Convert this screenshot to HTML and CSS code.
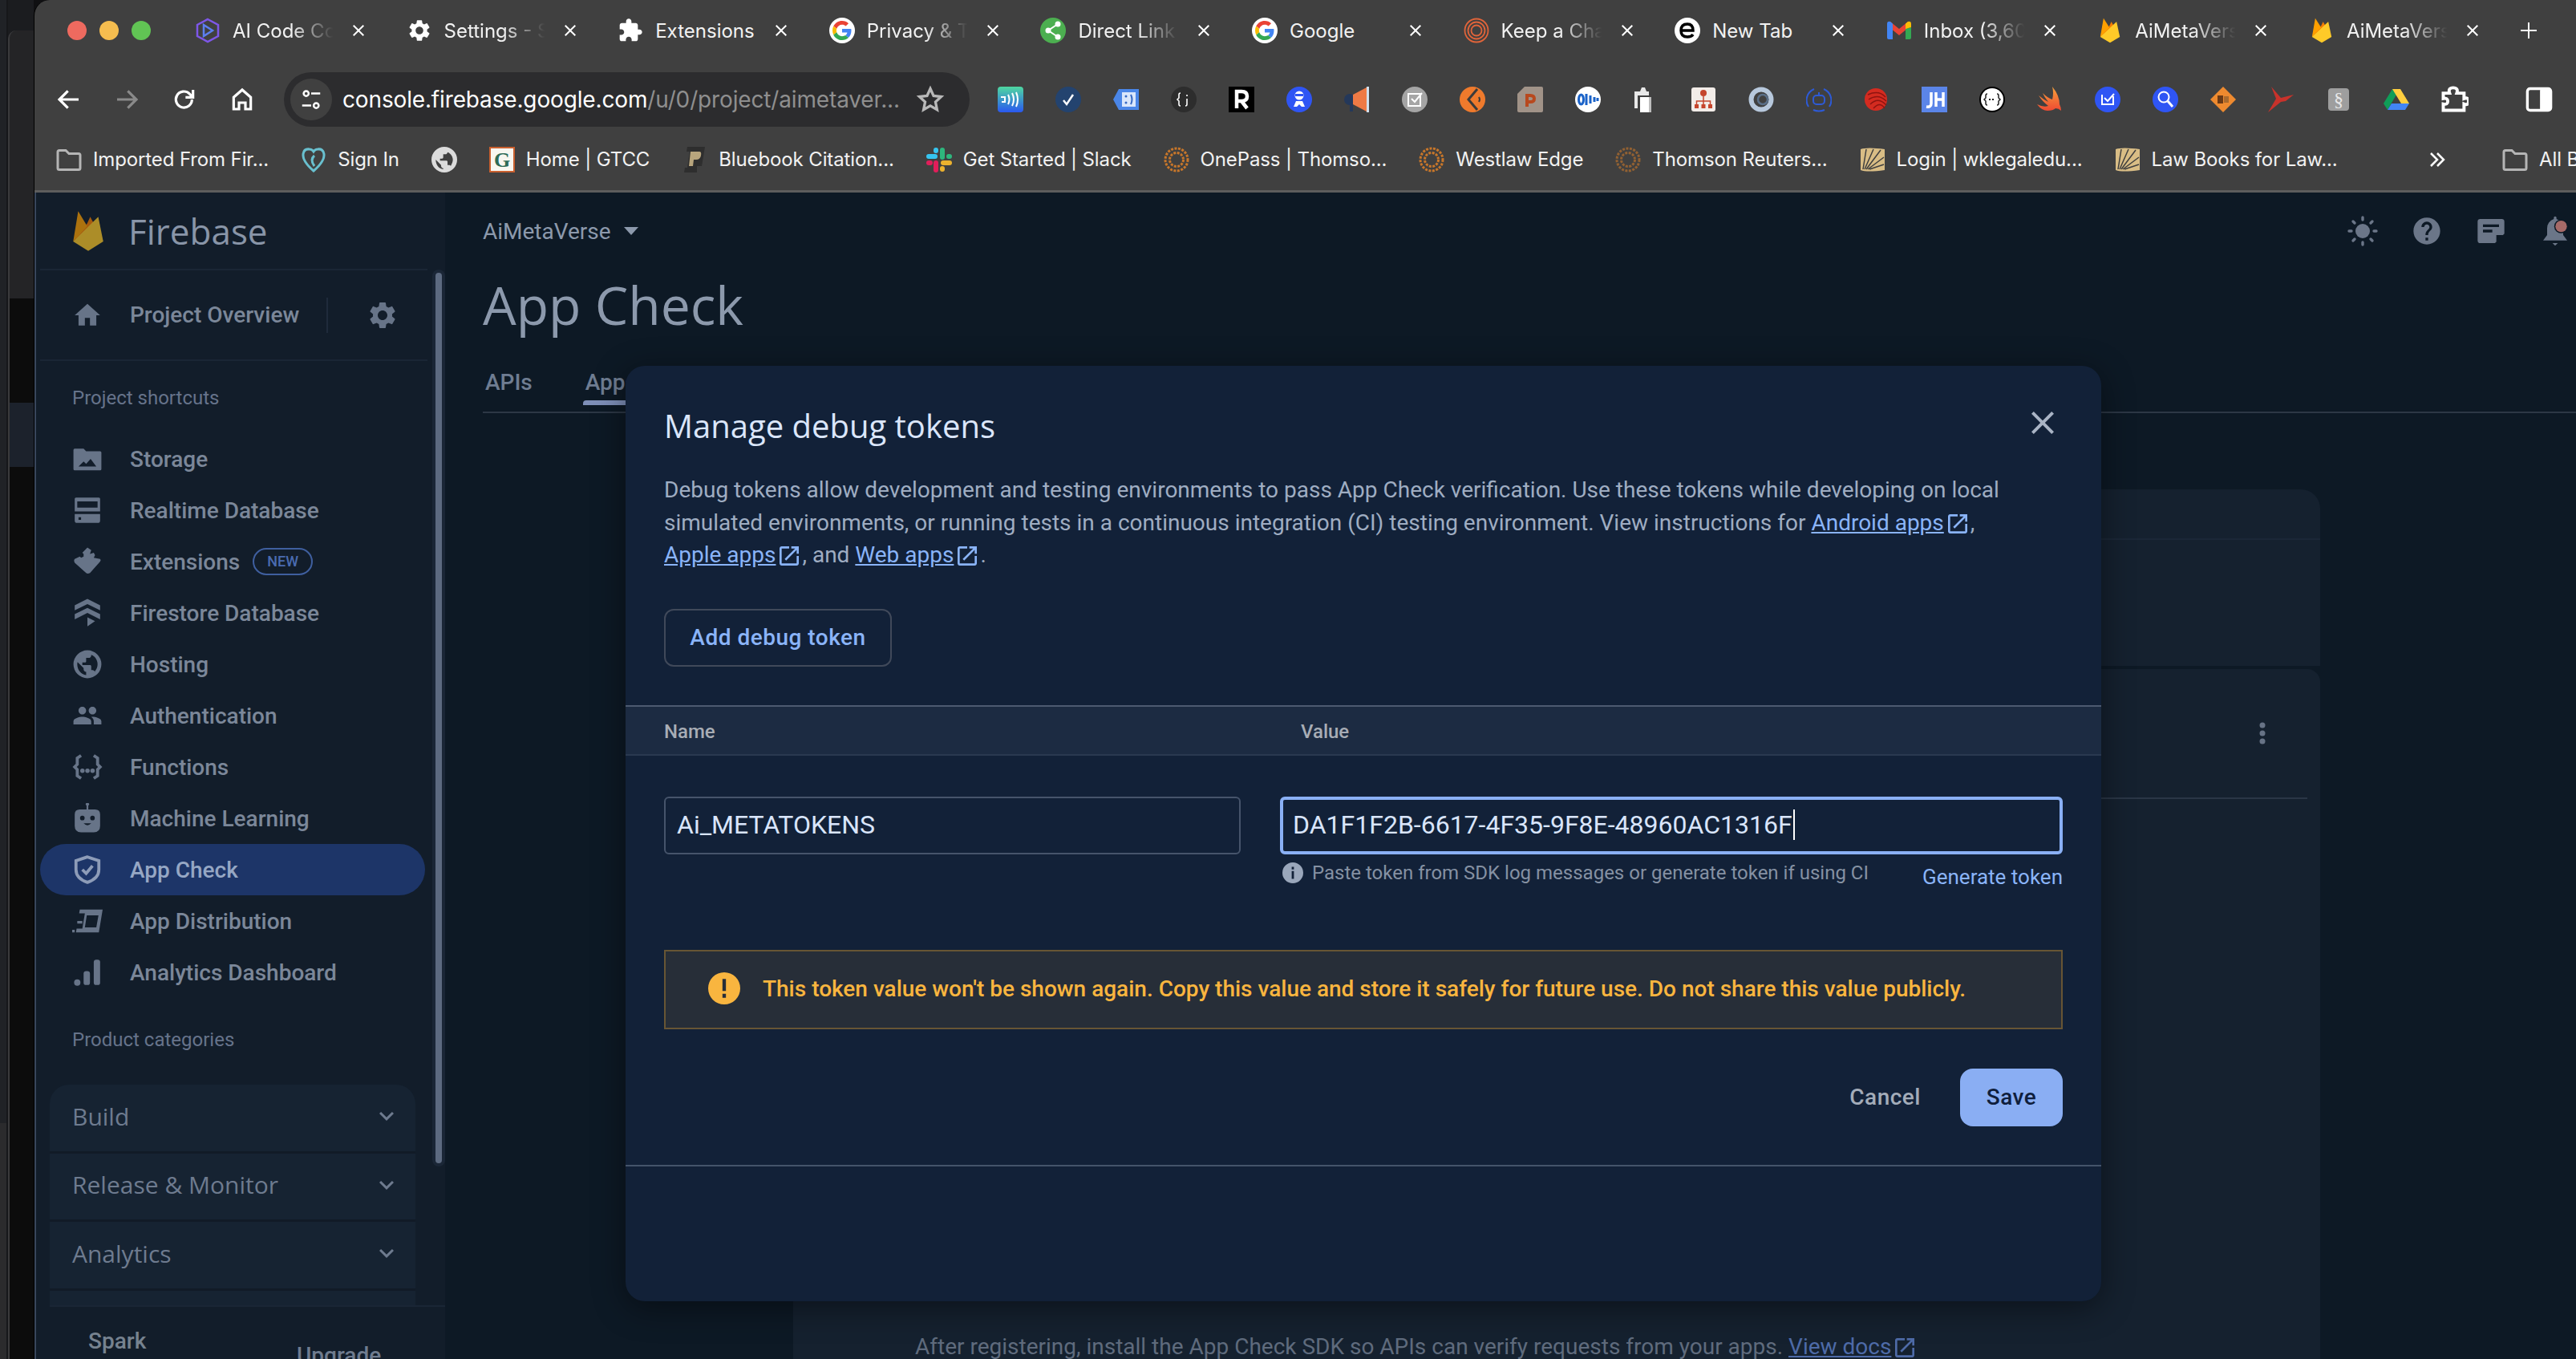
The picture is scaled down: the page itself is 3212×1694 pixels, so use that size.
FILE: index.html
```html
<!DOCTYPE html>
<html lang="en">
  <head>
    <meta charset="UTF-8" />
    <title>App Check - AiMetaVerse - Firebase console</title>
    <link rel="stylesheet" href="styles.css">
  </head>
  <body>
    <!-- shared icons -->
    <svg class="sprite">
      <symbol id="flame" viewBox="0 0 32 44" preserveAspectRatio="none">
        <path fill="#f57c00" d="M1 33 15 14l3-7 7 14z"/>
        <path fill="#ffa000" d="M1 33 6 1l9 16z"/>
        <path fill="#ffca28" d="M1 33 26 7l5 26-15 10z"/>
      </symbol>
      <symbol id="google" viewBox="-8 -8 64 64">
        <circle cx="24" cy="24" r="32" fill="#fff"/>
        <path fill="#EA4335" d="M24 9.5c3.54 0 6.71 1.22 9.21 3.6l6.85-6.85C35.9 2.38 30.47 0 24 0 14.62 0 6.51 5.38 2.56 13.22l7.98 6.19C12.43 13.72 17.74 9.5 24 9.5z"/>
        <path fill="#4285F4" d="M46.98 24.55c0-1.57-.15-3.09-.38-4.55H24v9.02h12.94c-.58 2.96-2.26 5.48-4.78 7.18l7.73 6c4.51-4.18 7.09-10.36 7.09-17.65z"/>
        <path fill="#FBBC05" d="M10.53 28.59c-.48-1.45-.76-2.99-.76-4.59s.27-3.14.76-4.59l-7.98-6.19C.92 16.46 0 20.12 0 24c0 3.88.92 7.54 2.56 10.78l7.97-6.19z"/>
        <path fill="#34A853" d="M24 48c6.48 0 11.93-2.13 15.89-5.81l-7.73-6c-2.15 1.45-4.92 2.3-8.16 2.3-6.26 0-11.57-4.22-13.47-9.91l-7.98 6.19C6.51 42.62 14.62 48 24 48z"/>
      </symbol>
      <symbol id="close" viewBox="0 0 24 24"><path d="M19 6.41 17.59 5 12 10.59 6.41 5 5 6.41 10.59 12 5 17.59 6.41 19 12 13.41 17.59 19 19 17.59 13.41 12z"/></symbol>
      <symbol id="folder" viewBox="0 0 32 32"><path fill="none" stroke="#b5b5b5" stroke-width="3" d="M2 6.5q0-2 2-2h8l4 4h12q2 0 2 2v16q0 2-2 2H4q-2 0-2-2z"/></symbol>
      <symbol id="ring" viewBox="0 0 32 32"><g fill="none" stroke="#c9772a" stroke-width="3" stroke-dasharray="3 1.5"><circle cx="16" cy="16" r="14"/><circle cx="16" cy="16" r="8.500"/></g></symbol>
      <symbol id="book" viewBox="0 0 32 32"><path fill="#d9bd85" d="M1 3q8-3 30 0v26q-22 3-30 0z"/><path fill="none" stroke="#3f3f3f" stroke-width="1.500" d="M4 28 8 3M6 28 17 3M8 28 26 4M10 28l20-15M12 28l18-6"/></symbol>
      <symbol id="open" viewBox="0 0 24 24"><path d="M19 19H5V5h7V3H5c-1.110 0-2 .9-2 2v14c0 1.100.89 2 2 2h14c1.100 0 2-.9 2-2v-7h-2zM14 3v2h3.590l-9.830 9.830 1.410 1.410L19 6.410V10h2V3z"/></symbol>
      <symbol id="more" viewBox="0 0 24 24"><path d="M16.59 8.59 12 13.170 7.410 8.590 6 10l6 6 6-6z"/></symbol>
    </svg>

    <div class="desktop">
      <div class="back-far"></div>
      <div class="back-near">
        <div class="back-bar"></div>
        <div class="back-row"><div class="back-select"></div></div>
      </div>
    </div>

    <div class="window">
      <header class="chrome">
        <div class="tabstrip">
          <div class="lights"><i class="red"></i><i class="amber"></i><i class="green"></i></div>
          <div class="tab">
            <svg class="fav" viewBox="0 0 32 32"><path fill="none" stroke="#7e57e8" stroke-width="2.500" d="M16 2 29 9v14l-13 7-13-7V9z"/><path fill="none" stroke="#5c7ff0" stroke-width="2.500" d="M11 9l11 7-11 7z"/></svg>
            <span class="tab-title fade">AI Code Co</span>
            <svg class="tab-x"><use href="#close"/></svg>
          </div>
          <div class="tab">
            <svg class="fav" viewBox="0 0 24 24" fill="#fff"><path d="M19.140 12.940c.04-.3.06-.61.06-.94 0-.32-.02-.64-.07-.94l2.030-1.580c.18-.14.23-.41.12-.61l-1.920-3.320c-.12-.22-.37-.29-.59-.22l-2.390.96c-.5-.38-1.030-.7-1.620-.94l-.36-2.540c-.04-.24-.24-.41-.48-.41h-3.840c-.24 0-.43.17-.47.41l-.36 2.540c-.59.24-1.130.57-1.620.94l-2.390-.96c-.22-.08-.47 0-.59.22L2.740 8.870c-.12.21-.08.47.12.61l2.030 1.580c-.05.3-.09.63-.09.94s.02.64.07.94l-2.030 1.580c-.18.14-.23.41-.12.61l1.920 3.320c.12.22.37.29.59.22l2.390-.96c.5.38 1.030.7 1.620.94l.36 2.540c.05.24.24.41.48.41h3.840c.24 0 .44-.17.47-.41l.36-2.540c.59-.24 1.130-.56 1.620-.94l2.390.96c.22.08.47 0 .59-.22l1.920-3.320c.12-.22.07-.47-.12-.61zM12 15.600c-1.980 0-3.600-1.620-3.600-3.600s1.620-3.600 3.600-3.600 3.600 1.620 3.600 3.600-1.620 3.600-3.600 3.600z"/></svg>
            <span class="tab-title fade">Settings - S</span>
            <svg class="tab-x"><use href="#close"/></svg>
          </div>
          <div class="tab">
            <svg class="fav" viewBox="0 0 24 24" fill="#fff"><path d="M20.500 11H19V7c0-1.100-.9-2-2-2h-4V3.500C13 2.120 11.880 1 10.500 1S8 2.120 8 3.500V5H4c-1.100 0-1.990.9-1.990 2v3.800H3.500c1.490 0 2.700 1.210 2.700 2.700s-1.210 2.700-2.700 2.700H2V20c0 1.100.9 2 2 2h3.800v-1.500c0-1.490 1.210-2.700 2.700-2.700s2.700 1.210 2.700 2.700V22H17c1.100 0 2-.9 2-2v-4h1.500c1.380 0 2.500-1.120 2.500-2.500S21.880 11 20.500 11z"/></svg>
            <span class="tab-title">Extensions</span>
            <svg class="tab-x"><use href="#close"/></svg>
          </div>
          <div class="tab">
            <svg class="fav"><use href="#google"/></svg>
            <span class="tab-title fade">Privacy &amp; T</span>
            <svg class="tab-x"><use href="#close"/></svg>
          </div>
          <div class="tab">
            <svg class="fav" viewBox="0 0 32 32"><circle cx="16" cy="16" r="16" fill="#4caf50"/><g fill="#fff"><circle cx="22" cy="8" r="3.500"/><circle cx="22" cy="24" r="3.500"/><circle cx="10" cy="16" r="3.500"/></g><path fill="none" stroke="#fff" stroke-width="2" d="M22 8 10 16l12 8"/></svg>
            <span class="tab-title fade">Direct Link</span>
            <svg class="tab-x"><use href="#close"/></svg>
          </div>
          <div class="tab">
            <svg class="fav"><use href="#google"/></svg>
            <span class="tab-title">Google</span>
            <svg class="tab-x"><use href="#close"/></svg>
          </div>
          <div class="tab">
            <svg class="fav" viewBox="0 0 32 32"><g fill="none" stroke="#e0643a" stroke-width="1.800"><circle cx="16" cy="16" r="14.500"/><circle cx="16" cy="16" r="10.500"/><circle cx="16" cy="16" r="6.500"/></g></svg>
            <span class="tab-title fade">Keep a Cha</span>
            <svg class="tab-x"><use href="#close"/></svg>
          </div>
          <div class="tab">
            <svg class="fav" viewBox="0 0 32 32"><circle cx="16" cy="16" r="16" fill="#fff"/><path fill="none" stroke="#000" stroke-width="3.500" d="M8 16h15q0-8-7-8-8 0-8 8t8 8q5 0 7-3"/></svg>
            <span class="tab-title">New Tab</span>
            <svg class="tab-x"><use href="#close"/></svg>
          </div>
          <div class="tab">
            <svg class="fav" viewBox="0 0 32 32"><path fill="#ea4335" d="M5 5l11 9 11-9v8L16 22 5 13z"/><path fill="#4285f4" d="M1 8q0-4 4-3l3 2.500V27H3q-2 0-2-2z"/><path fill="#34a853" d="M31 12V25q0 2-2 2h-5V14z"/><path fill="#fbbc04" d="M31 8q0-4-4-3l-3 2.500V14l7-2z"/></svg>
            <span class="tab-title fade">Inbox (3,60</span>
            <svg class="tab-x"><use href="#close"/></svg>
          </div>
          <div class="tab">
            <svg class="fav fav-flame"><use href="#flame"/></svg>
            <span class="tab-title fade">AiMetaVers</span>
            <svg class="tab-x"><use href="#close"/></svg>
          </div>
          <div class="tab">
            <svg class="fav fav-flame"><use href="#flame"/></svg>
            <span class="tab-title fade">AiMetaVers</span>
            <svg class="tab-x"><use href="#close"/></svg>
          </div>
          <svg class="newtab" viewBox="0 0 20 20"><path fill="#fff" d="M9 0h2v9h9v2h-9v9H9v-9H0V9h9z"/></svg>
        </div>

        <div class="toolbar">
          <svg class="nav" viewBox="0 0 24 24" fill="none" stroke="#fff" stroke-width="2.400"><path d="M21 12H4M11 4l-8 8 8 8"/></svg>
          <svg class="nav" viewBox="0 0 24 24" fill="none" stroke="#8a8a8a" stroke-width="2.400"><path d="M3 12h17M13 4l8 8-8 8"/></svg>
          <svg class="nav" viewBox="0 0 24 24" fill="none" stroke="#fff" stroke-width="2.400"><path d="M19 12a7.500 7.500 0 1 1-2.300-5.400L20 10M20 3v7h-7"/></svg>
          <svg class="nav" viewBox="0 0 24 24" fill="none" stroke="#fff" stroke-width="2.400"><path d="M4 21V10l8-7 8 7v11h-5v-6H9v6z"/></svg>
          <div class="omnibox">
            <div class="tune">
              <svg viewBox="0 0 24 24" fill="none" stroke="#fff" stroke-width="2"><circle cx="7" cy="6" r="2.500"/><path d="M12 6h9M3 18h9"/><circle cx="17" cy="18" r="2.500"/></svg>
            </div>
            <span class="url">console.firebase.google.com<span class="url-rest">/u/0/project/aimetaver...</span></span>
            <svg class="star" viewBox="0 0 24 24" fill="none" stroke="#b8b8b8" stroke-width="2.200"><path d="m12 3 2.700 6 6.300.7-4.700 4.300 1.300 6.500L12 17.200 6.400 20.500 7.700 14 3 9.700 9.300 9z"/></svg>
          </div>
          <div class="ext-icons">
            <svg viewBox="0 0 32 32"><defs><linearGradient id="g1" x2="0" y2="1"><stop stop-color="#4fd8a0"/><stop offset="1" stop-color="#2a58f0"/></linearGradient></defs><rect width="32" height="32" rx="4" fill="url(#g1)"/><path fill="none" stroke="#fff" stroke-width="2" d="M4 13h5v6H5M13 10q3 6 0 12M18 8q4 8 0 16M23 7q4 9 0 18"/></svg>
            <svg viewBox="0 0 32 32"><circle cx="16" cy="16" r="16" fill="#23436f"/><path fill="none" stroke="#fff" stroke-width="2.500" d="m10 17 4 5 8-12"/></svg>
            <svg viewBox="0 0 32 32"><path fill="#4a86e8" d="M0 16 7 3h25v26H7z"/><rect x="11" y="7" width="17" height="18" fill="#d9e6fb"/><g fill="#3568c4"><circle cx="16" cy="12" r="1.500"/><circle cx="16" cy="20" r="1.500"/></g><path fill="none" stroke="#3568c4" stroke-width="2" d="M22 10q3 6 0 12"/></svg>
            <svg viewBox="0 0 32 32"><circle cx="16" cy="16" r="16" fill="#2d2d2d"/><path fill="none" stroke="#fff" stroke-width="1.600" d="M12 8q-2 0-2 2v4l-2 2 2 2v4q0 2 2 2M20 15v7q0 2-2 2M20 10v2"/></svg>
            <svg viewBox="0 0 32 32"><rect width="32" height="32" fill="#000"/><path fill="none" stroke="#fff" stroke-width="4.500" d="M10 27V6h6q7 0 7 6t-7 6h-6m6 0 7 9"/></svg>
            <svg viewBox="0 0 32 32"><circle cx="16" cy="16" r="16" fill="#2f55f4"/><circle cx="16" cy="11" r="5.500" fill="#fff"/><rect x="11" y="9" width="10" height="3" fill="#2f55f4"/><path fill="#fff" d="M9 25l3-7h8l3 7h-4l-3-3-3 3z"/></svg>
            <svg viewBox="0 0 32 32"><circle cx="7" cy="16" r="7" fill="#24385a"/><rect x="7" y="22" width="4" height="9" fill="#24385a"/><path fill="#ee7a45" d="M11 10 28 1v30l-17-9z"/><rect x="28" width="3" height="32" fill="#cfe0ee"/></svg>
            <svg viewBox="0 0 32 32"><circle cx="16" cy="16" r="16" fill="#a5a5a5"/><rect x="8" y="9" width="15" height="15" fill="none" stroke="#fff" stroke-width="2"/><path fill="none" stroke="#fff" stroke-width="2" d="m12 15 4 4 9-11"/></svg>
            <svg viewBox="0 0 32 32"><circle cx="16" cy="16" r="16" fill="#ef7a2c"/><path fill="none" stroke="#3b3b3b" stroke-width="3" d="M22 3 11 16l11 13"/><path fill="none" stroke="#3b3b3b" stroke-width="2" d="M24 13q2 3 0 6"/></svg>
            <svg viewBox="0 0 32 32"><path fill="#a19388" d="M9 0h21q2 0 2 2v28q0 2-2 2H2q-2 0-2-2V9z"/><path fill="none" stroke="#b8491e" stroke-width="4" d="M12 25V11h4q5 0 5 4t-5 4h-4"/></svg>
            <svg viewBox="0 0 32 32"><circle cx="16" cy="16" r="16" fill="#fff"/><g fill="none" stroke="#1a62c8" stroke-width="3"><ellipse cx="7.500" cy="16" rx="3" ry="6"/><path d="M14 9v14M19 11v10M24 13v6M28 14v4"/></g></svg>
            <svg viewBox="0 0 32 32"><path fill="#e8e8e8" d="M2 6h7l2-5h4l2 5h3v5H6v16H2z"/><rect x="9" y="13" width="14" height="19" fill="#fff"/><path fill="#bdbdbd" d="M20 13h3v19h-3z"/></svg>
            <svg viewBox="0 0 32 32"><rect x="1" y="1" width="30" height="30" rx="3" fill="#f2ece8"/><g fill="#c5452c"><circle cx="16" cy="8" r="4"/><rect x="5" y="22" width="5" height="5"/><rect x="13.500" y="22" width="5" height="5"/><rect x="22" y="22" width="5" height="5"/></g><path fill="none" stroke="#c5452c" stroke-width="1.500" d="M16 12v10M7.500 22v-4h17v4"/></svg>
            <svg viewBox="0 0 32 32"><circle cx="16" cy="16" r="12.500" fill="none" stroke="#b7c8dc" stroke-width="6"/><circle cx="18" cy="16" r="6" fill="none" stroke="#5a6f88" stroke-width="2.500"/></svg>
            <svg viewBox="0 0 32 32" fill="none" stroke="#2d5ad6" stroke-width="2"><path d="M10 3a15 15 0 0 0-7 22M22 3a15 15 0 0 1 7 22M9 29q7 3 14 0"/><rect x="9" y="11" width="14" height="11" rx="4"/><path d="M16 7v4"/><path d="M13 16h.1M19 16h.1"/></svg>
            <svg viewBox="0 0 32 32"><circle cx="15" cy="16" r="14" fill="#d42b20"/><path fill="none" stroke="#8e1410" stroke-width="1.500" d="M5 10q14-6 22 3M6 16q12-8 22 2M8 22q10-10 20 1M12 27q8-9 14 0"/></svg>
            <svg viewBox="0 0 32 32"><rect width="32" height="32" fill="#5b85e8"/><path fill="none" stroke="#fff" stroke-width="3.500" d="M12 7v14q0 5-6 4M18 7v18M27 7v18M18 16h9"/></svg>
            <svg viewBox="0 0 32 32"><circle cx="16" cy="16" r="16" fill="#000"/><circle cx="16" cy="16" r="14" fill="#fff"/><path fill="none" stroke="#222" stroke-width="1.500" d="M10 9q-2 0-2 2v3l-2 2 2 2v3q0 2 2 2M22 9q2 0 2 2v3l2 2-2 2v3q0 2-2 2"/><path stroke="#222" stroke-width="2" stroke-dasharray="2 2" d="M12 16h8"/></svg>
            <svg viewBox="0 0 32 32"><defs><linearGradient id="g2" x2="0" y2="1"><stop stop-color="#f8a23a"/><stop offset="1" stop-color="#ee4a33"/></linearGradient></defs><path fill="url(#g2)" d="M19 0q9 11 9 22 2 4 2 8-3-3-7-3-3 3-10 3T0 22q8 4 14 2-7-5-12-13 6 5 12 8-5-6-7-11 6 6 12 8 2-8 0-16z"/></svg>
            <svg viewBox="0 0 32 32"><circle cx="16" cy="16" r="16" fill="#2f55f4"/><path fill="none" stroke="#fff" stroke-width="2" d="M9 10v12h14V12M12 14l4 4 8-9"/></svg>
            <svg viewBox="0 0 32 32"><circle cx="16" cy="16" r="16" fill="#2f55f4"/><circle cx="14" cy="13" r="6.500" fill="none" stroke="#fff" stroke-width="2"/><path stroke="#fff" stroke-width="3" d="m19 18 6 7"/></svg>
            <svg viewBox="0 0 32 32"><path fill="#ee8a2f" d="M16 0 32 16 16 32 0 16z"/><rect x="9" y="11" width="7" height="10" fill="#6b3a16"/><rect x="17" y="12" width="6" height="8" fill="#a96a2e"/></svg>
            <svg viewBox="0 0 32 32"><path fill="#c8322b" d="M4 0 16 14l16-4-10 8-6 1L0 32l10-17z"/></svg>
            <svg viewBox="0 0 32 32"><rect x="3" y="2" width="26" height="28" rx="4" fill="#9e9e9e"/><text x="16" y="24" text-anchor="middle" class="sect">§</text></svg>
            <svg viewBox="0 0 32 32"><path fill="#0f9d58" d="M11 3 0 21l5 8L16 10z"/><path fill="#ffcf3f" d="M11 3h10l11 18H22z"/><path fill="#4285f4" d="M5 29h22l5-8H10z"/></svg>
          </div>
          <svg class="puzzle" viewBox="0 0 32 32"><path fill="none" stroke="#fff" stroke-width="3.500" d="M4 9h7q-2-6 4-6t4 6h8v6q5-2 5 3t-5 3v7H4v-7q5 1 5-3t-5-3z"/></svg>
          <svg class="sidepanel" viewBox="0 0 32 32"><rect x="3" y="4" width="26" height="24" rx="3" fill="none" stroke="#fff" stroke-width="3"/><rect x="17" y="4" width="12" height="24" rx="2" fill="#fff"/></svg>
        </div>

        <nav class="bookmarks">
          <a class="bm"><svg><use href="#folder"/></svg>Imported From Fir...</a>
          <a class="bm"><svg viewBox="0 0 32 32"><path fill="none" stroke="#69c0cf" stroke-width="3" d="M16 30Q2 18 3 9q1-7 8-6 3 0 5 3 2-3 5-3 7-1 8 6 1 9-13 21zM17 24q-6-8 0-13"/></svg>Sign In</a>
          <a class="bm"><svg viewBox="0 0 24 24" fill="#dcdcdc"><path d="M12 0a12 12 0 1 0 0 24 12 12 0 0 0 0-24zm-1 21c-4-.5-7-4-7-9l5 5v1c0 1 1 2 2 2zm7-3c-.3-1-1-1-2-1h-1v-3c0-.5-.5-1-1-1H8v-2h2c.5 0 1-.5 1-1V7h2c1 0 2-1 2-2 3 1 5 4 5 7 0 2-1 4-2 6z"/></svg></a>
          <a class="bm"><svg viewBox="0 0 32 32"><rect x="1" y="1" width="30" height="30" fill="#f8f6f0" stroke="#c9602f" stroke-width="2"/><text x="16" y="25" text-anchor="middle" class="gtcc">G</text></svg>Home | GTCC</a>
          <a class="bm"><svg viewBox="0 0 32 32"><path fill="#2e2e2e" d="M7 0h22l-1 6-3 18H19v8H3l1-6h3l3-20H6z"/><path fill="#b8a57d" d="M11 6h11q3 0 2 5t-6 5h-3l-1 8H9z"/></svg>Bluebook Citation...</a>
          <a class="bm"><svg viewBox="0 0 32 32"><g stroke-width="6" stroke-linecap="round"><path stroke="#36c5f0" d="M3 12h8"/><path stroke="#2eb67d" d="M20 4v9"/><path stroke="#ecb22e" d="M21 20h8"/><path stroke="#e01e5a" d="M12 20v9"/></g><path stroke="#e01e5a" stroke-width="6" stroke-linecap="round" d="M3 20h2"/><path stroke="#36c5f0" stroke-width="6" stroke-linecap="round" d="M12 4v1"/><path stroke="#2eb67d" stroke-width="6" stroke-linecap="round" d="M28 12h1"/><path stroke="#ecb22e" stroke-width="6" stroke-linecap="round" d="M20 27v1"/></svg>Get Started | Slack</a>
          <a class="bm"><svg><use href="#ring"/></svg>OnePass | Thomso...</a>
          <a class="bm"><svg><use href="#ring"/></svg>Westlaw Edge</a>
          <a class="bm"><svg class="dim"><use href="#ring"/></svg>Thomson Reuters...</a>
          <a class="bm"><svg><use href="#book"/></svg>Login | wklegaledu...</a>
          <a class="bm"><svg><use href="#book"/></svg>Law Books for Law...</a>
          <svg class="bm-more" viewBox="0 0 24 24" fill="none" stroke="#fff" stroke-width="2.500"><path d="m4 4 8 8-8 8M12 4l8 8-8 8"/></svg>
          <a class="bm bm-all"><svg><use href="#folder"/></svg>All B</a>
        </nav>
      </header>

      <div class="app">
        <aside class="sidebar">
          <div class="brand">
            <svg class="brand-logo"><use href="#flame"/></svg>
            <span class="brand-name">Firebase</span>
          </div>
          <div class="overview">
            <svg class="side-icon" viewBox="0 0 24 24"><path d="M10 20v-6h4v6h5v-8h3L12 3 2 12h3v8z"/></svg>
            <span class="side-label">Project Overview</span>
            <span class="overview-rule"></span>
            <svg class="overview-gear" viewBox="0 0 24 24"><path d="M19.140 12.940c.04-.3.06-.61.06-.94 0-.32-.02-.64-.07-.94l2.030-1.580c.18-.14.23-.41.12-.61l-1.920-3.320c-.12-.22-.37-.29-.59-.22l-2.390.96c-.5-.38-1.030-.7-1.620-.94l-.36-2.540c-.04-.24-.24-.41-.48-.41h-3.840c-.24 0-.43.17-.47.41l-.36 2.540c-.59.24-1.130.57-1.620.94l-2.390-.96c-.22-.08-.47 0-.59.22L2.740 8.870c-.12.21-.08.47.12.61l2.030 1.580c-.05.3-.09.63-.09.94s.02.64.07.94l-2.030 1.580c-.18.14-.23.41-.12.61l1.920 3.320c.12.22.37.29.59.22l2.390-.96c.5.38 1.030.7 1.620.94l.36 2.540c.05.24.24.41.48.41h3.840c.24 0 .44-.17.47-.41l.36-2.540c.59-.24 1.130-.56 1.620-.94l2.390.96c.22.08.47 0 .59-.22l1.920-3.320c.12-.22.07-.47-.12-.61zM12 15.600c-1.980 0-3.600-1.620-3.600-3.600s1.620-3.600 3.600-3.600 3.600 1.620 3.600 3.600-1.620 3.600-3.600 3.600z"/></svg>
          </div>

          <div class="side-heading">Project shortcuts</div>
          <ul class="side-list">
            <li class="side-item">
              <svg class="side-icon" viewBox="0 0 24 24"><path fill-rule="evenodd" d="M2 4h7l2 2h11q1 0 1 1v13q0 1-1 1H2q-1 0-1-1V5q0-1 1-1zm3 14h14l-4.500-6-3.500 4-2-2z"/></svg>
              <span class="side-label">Storage</span>
            </li>
            <li class="side-item">
              <svg class="side-icon" viewBox="0 0 24 24"><path fill-rule="evenodd" d="M3 2h18q1 0 1 1v10H2V3q0-1 1-1zm1 3v5h16V5zM2 15h20v5q0 2-2 2H4q-2 0-2-2zm3 2.500v2h2v-2z"/></svg>
              <span class="side-label">Realtime Database</span>
            </li>
            <li class="side-item">
              <svg class="side-icon" viewBox="0 0 24 24"><path d="M12 1l3 2-1 3 3-1 1 2-1 2 5 1q1 1 0 2l-8 9q-2 1-3 0l-9-8q-1-2 0-3l4-2 1 1 2-1V6l-1-1z"/></svg>
              <span class="side-label">Extensions</span>
              <span class="badge-new">NEW</span>
            </li>
            <li class="side-item">
              <svg class="side-icon" viewBox="0 0 24 24"><path d="M12 1l10 5v4L12 5 2 10V6zM12 8l10 5v4l-10-5-10 5v-4zM12 15.500l6 3-6 4z"/></svg>
              <span class="side-label">Firestore Database</span>
            </li>
            <li class="side-item">
              <svg class="side-icon" viewBox="0 0 24 24"><path d="M12 1a11 11 0 1 0 0 22 11 11 0 0 0 0-22zm-1 19.500c-4-.5-7-4-7-8.500 0-.6.1-1.200.2-1.800L9 15v1c0 1.100.9 2 2 2zm6.900-2.500c-.3-.8-1-1.400-1.900-1.400h-1v-3c0-.6-.4-1-1-1H8v-2h2c.6 0 1-.4 1-1V7h2c1.100 0 2-.9 2-2v-.4c3 1.200 5 4 5 7.400 0 2.100-.8 4-2.100 5.500z"/></svg>
              <span class="side-label">Hosting</span>
            </li>
            <li class="side-item">
              <svg class="side-icon" viewBox="0 0 24 24"><path d="M16 11c1.660 0 3-1.340 3-3s-1.340-3-3-3-3 1.340-3 3 1.340 3 3 3zm-8 0c1.660 0 3-1.340 3-3S9.660 5 8 5 5 6.340 5 8s1.340 3 3 3zm0 2c-2.330 0-7 1.170-7 3.500V19h14v-2.500C15 14.170 10.330 13 8 13zm8 0c-.29 0-.62.02-.97.05 1.160.84 1.970 1.970 1.970 3.450V19h6v-2.500c0-2.330-4.670-3.500-7-3.500z"/></svg>
              <span class="side-label">Authentication</span>
            </li>
            <li class="side-item">
              <svg class="side-icon stroked" viewBox="0 0 24 24"><path d="M7 3 4 5v5l-2 2 2 2v5l3 2M17 3l3 2v5l2 2-2 2v5l-3 2"/><path class="dots" d="M8 15h.1M12 15h.1M16 15h.1"/></svg>
              <span class="side-label">Functions</span>
            </li>
            <li class="side-item">
              <svg class="side-icon" viewBox="0 0 24 24"><path fill-rule="evenodd" d="M12 0a1 1 0 0 1 .7 1.900V5H18q4 0 4 4v9q0 5-5 5H7q-5 0-5-5V9q0-4 4-4h5.300V1.900A1 1 0 0 1 12 0zM8 10a1.800 1.800 0 1 0 0 3.600A1.800 1.800 0 0 0 8 10zm8 0a1.800 1.800 0 1 0 0 3.600 1.800 1.800 0 0 0 0-3.600zm-7 6q3 3 6 0z"/></svg>
              <span class="side-label">Machine Learning</span>
            </li>
            <li class="side-item active">
              <svg class="side-icon stroked" viewBox="0 0 24 24"><path d="M12 2 3 5v7q0 7 9 10 9-3 9-10V5z"/><path d="m8 12 3 3 5-6"/></svg>
              <span class="side-label">App Check</span>
            </li>
            <li class="side-item">
              <svg class="side-icon" viewBox="0 0 24 24"><path fill-rule="evenodd" d="M6 3h18l-3 18H3l.5-3H8l2-12H5.500zM11.500 7.500 10 17h9l1.700-9.500zM0 19h2v2H0zM4 12h4v2H4z"/></svg>
              <span class="side-label">App Distribution</span>
            </li>
            <li class="side-item">
              <svg class="side-icon" viewBox="0 0 24 24"><circle cx="4" cy="20" r="2.500"/><rect x="9" y="11" width="5" height="11" rx="2"/><rect x="17" y="2" width="5" height="20" rx="2"/></svg>
              <span class="side-label">Analytics Dashboard</span>
            </li>
          </ul>

          <div class="side-heading second">Product categories</div>
          <div class="categories">
            <div class="category">Build<svg class="chev"><use href="#more"/></svg></div>
            <div class="category">Release &amp; Monitor<svg class="chev"><use href="#more"/></svg></div>
            <div class="category">Analytics<svg class="chev"><use href="#more"/></svg></div>
            <div class="category clipped"></div>
          </div>
          <div class="plan">
            <span class="plan-name">Spark</span>
            <span class="plan-upgrade">Upgrade</span>
          </div>
          <div class="side-scroll"><div class="side-thumb"></div></div>
        </aside>

        <main class="main">
          <div class="topbar">
            <span class="project">AiMetaVerse</span>
            <i class="caret"></i>
            <div class="top-icons">
              <svg viewBox="0 0 40 40"><circle cx="20" cy="20" r="9"/><g stroke="#6b7688" stroke-width="3.400" stroke-linecap="round"><path d="M20 3v3M20 34v3M3 20h3M34 20h3M8 8l2 2M30 30l2 2M32 8l-2 2M10 30l-2 2"/></g></svg>
              <svg viewBox="0 0 24 24"><path d="M12 2C6.480 2 2 6.480 2 12s4.480 10 10 10 10-4.480 10-10S17.520 2 12 2zm1 17h-2v-2h2zm2.070-7.750-.9.92C13.450 12.900 13 13.500 13 15h-2v-.5c0-1.100.45-2.100 1.170-2.830l1.240-1.260c.37-.36.59-.86.59-1.410 0-1.100-.9-2-2-2s-2 .9-2 2H8c0-2.210 1.790-4 4-4s4 1.790 4 4c0 .88-.36 1.680-.93 2.250z"/></svg>
              <svg viewBox="0 0 24 24"><path fill-rule="evenodd" d="M4 3h16q2 0 2 2v9l-7 7H4q-2 0-2-2V5q0-2 2-2zm2 4v2h12V7zm0 4v2h7v-2zm15 4h-5v5z"/></svg>
              <svg viewBox="0 0 24 24"><path d="M12 1q1 0 1 1v1a7 7 0 0 1 5 7v5l3 4H3l3-4v-5a7 7 0 0 1 5-7V2q0-1 1-1zM10 21h4l-2 2z"/><circle cx="16.500" cy="8.500" r="5.200" fill="#0d1925"/><circle cx="16.500" cy="8.500" r="4.300" fill="#a66a68"/></svg>
            </div>
          </div>
          <h1 class="page-title">App Check</h1>
          <div class="page-tabs">
            <span class="page-tab">APIs</span>
            <span class="page-tab current">Apps</span>
          </div>
          <section class="panel panel-first">
            <div class="panel-head"></div>
          </section>
          <section class="panel panel-second">
            <div class="panel-row">
              <svg class="kebab" viewBox="0 0 8 30"><circle cx="4" cy="5" r="3.500"/><circle cx="4" cy="15" r="3.500"/><circle cx="4" cy="25" r="3.500"/></svg>
            </div>
            <p class="panel-note">After registering, install the App Check SDK so APIs can verify requests from your apps. <a>View docs</a><svg class="ext-link"><use href="#open"/></svg></p>
          </section>
        </main>
      </div>

      <!-- dialog -->
      <div class="modal">
        <div class="modal-head">
          <h2>Manage debug tokens</h2>
          <svg class="modal-close" viewBox="0 0 24 24"><use href="#close"/></svg>
        </div>
        <p class="modal-text">
          Debug tokens allow development and testing environments to pass App Check verification. Use these tokens while developing on local<br>
          simulated environments, or running tests in a continuous integration (CI) testing environment. View instructions for <a>Android apps</a><svg class="ext-link"><use href="#open"/></svg>,<br>
          <a>Apple apps</a><svg class="ext-link"><use href="#open"/></svg>, and <a>Web apps</a><svg class="ext-link"><use href="#open"/></svg>.
        </p>
        <button class="btn-outline">Add debug token</button>
        <div class="token-head"><span>Name</span><span>Value</span></div>
        <div class="token-row">
          <div class="field name-field">Ai_METATOKENS</div>
          <div class="value-col">
            <div class="field value-field">DA1F1F2B-6617-4F35-9F8E-48960AC1316F<i class="cursor"></i></div>
            <div class="hint-row">
              <svg class="hint-icon" viewBox="0 0 24 24"><path fill-rule="evenodd" d="M12 0a12 12 0 1 1 0 24 12 12 0 0 1 0-24zm-1.300 5v3h2.600V5zm0 5v9h2.600v-9z"/></svg>
              <span class="hint">Paste token from SDK log messages or generate token if using CI</span>
              <a class="generate">Generate token</a>
            </div>
          </div>
        </div>
        <div class="warning">
          <svg class="warning-icon" viewBox="0 0 24 24"><path fill-rule="evenodd" d="M12 0a12 12 0 1 1 0 24 12 12 0 0 1 0-24zm-1.300 5v9h2.600V5zm0 11v3h2.600v-3z"/></svg>
          <span>This token value won't be shown again. Copy this value and store it safely for future use. Do not share this value publicly.</span>
        </div>
        <div class="modal-actions">
          <button class="btn-text">Cancel</button>
          <button class="btn-save">Save</button>
        </div>
      </div>
    </div>
  </body>
</html>
```

FILE: styles.css
```css
* {
  box-sizing: border-box;
}

body {
  margin: 0;
  width: 3212px;
  height: 1694px;
  overflow: hidden;
  display: flex;
  background-color: #101012;
  font-family: Roboto, "Liberation Sans", sans-serif;
}

.sprite {
  width: 0;
  height: 0;
  display: block;
  flex: none;
}

/* other windows peeking out on the left */
.desktop {
  width: 42px;
  flex: none;
  display: flex;
  background-color: #1b1c1f;
}

.back-far {
  width: 10px;
  background: linear-gradient(#202226 0, #202226 1400px, #2b2b2d 1400px);
  border-right: 2px solid #16171a;
}

.back-near {
  flex: 1;
  margin-top: 38px;
  background-color: #2a2a2b;
  border-radius: 10px 0 0 0;
  border-left: 2px solid #3a3a3c;
  display: flex;
  flex-direction: column;
}

.back-bar {
  height: 334px;
  background-color: #242426;
  border-radius: 10px 0 0 0;
}

.back-row {
  flex: 1;
  padding-top: 130px;
  background-color: #0c0c0c;
}

.back-select {
  height: 80px;
  background-color: #1c222c;
}

.window {
  position: relative;
  flex: 1;
  border-left: 1px solid #000;
  display: flex;
  flex-direction: column;
  border-radius: 20px 0 0 0;
  overflow: hidden;
}

/* browser chrome */
.chrome {
  height: 240px;
  flex: none;
  background-color: #404040;
  border-bottom: 3px solid #5d5d5d;
  color: #f2f2f2;
  font-family: Inter, "Liberation Sans", sans-serif;
  font-size: 24px;
}

.tabstrip {
  height: 76px;
  display: flex;
  align-items: center;
}

.lights {
  display: flex;
  gap: 16px;
  margin-left: 41px;
  margin-right: 39px;
}

.lights i {
  width: 24px;
  height: 24px;
  border-radius: 50%;
}

.red {
  background-color: #ee6a5f;
}

.amber {
  background-color: #f5bd4f;
}

.green {
  background-color: #61c454;
}

.tab {
  width: 263.6px;
  flex: none;
  display: flex;
  align-items: center;
  padding-left: 16px;
}

.fav {
  width: 32px;
  height: 32px;
  flex: none;
}

.fav-flame {
  width: 26px;
  margin: 0 3px;
}

.tab-title {
  width: 132px;
  margin-left: 15px;
  white-space: nowrap;
  overflow: hidden;
}

.tab-title.fade {
  -webkit-mask-image: linear-gradient(to right, #000 55%, transparent 95%);
  mask-image: linear-gradient(to right, #000 55%, transparent 95%);
}

.tab-x {
  width: 24px;
  height: 24px;
  margin-left: 13px;
  fill: #fff;
  flex: none;
}

.newtab {
  width: 20px;
  height: 20px;
  margin-left: 16px;
}

.toolbar {
  height: 96px;
  display: flex;
  align-items: center;
  padding-left: 27px;
  margin-top: 0;
}

.nav {
  width: 32px;
  height: 32px;
  flex: none;
  margin-right: 40px;
}

.omnibox {
  width: 855px;
  height: 68px;
  margin-left: -4px;
  flex: none;
  display: flex;
  align-items: center;
  background-color: #2c2c2e;
  border-radius: 34px;
  padding-left: 8px;
}

.tune {
  width: 52px;
  height: 52px;
  border-radius: 50%;
  background-color: #404040;
  display: flex;
  align-items: center;
  justify-content: center;
}

.tune svg {
  width: 30px;
  height: 30px;
}

.url {
  margin-left: 13px;
  font-size: 28px;
  letter-spacing: -0.15px;
  color: #fff;
  white-space: nowrap;
}

.url-rest {
  color: #8f8f8f;
}

.star {
  width: 36px;
  height: 36px;
  margin-left: auto;
  margin-right: 31px;
}

.ext-icons {
  display: flex;
  gap: 40px;
  margin-left: 35px;
}

.ext-icons svg {
  width: 32px;
  height: 32px;
}

.sect {
  font: 24px "Liberation Serif", serif;
  fill: #e8e8e8;
}

.gtcc {
  font: bold 26px "Liberation Serif", serif;
  fill: #2d6a55;
}

.puzzle {
  width: 36px;
  height: 36px;
  margin-left: 38px;
}

.sidepanel {
  width: 36px;
  height: 36px;
  margin-left: 70px;
}

.bookmarks {
  height: 65px;
  margin-top: -6px;
  display: flex;
  align-items: center;
  padding-left: 27px;
  position: relative;
  letter-spacing: -0.12px;
}

.bm {
  display: flex;
  align-items: center;
  gap: 14px;
  margin-right: 40px;
  white-space: nowrap;
  flex: none;
}

.bm svg {
  width: 32px;
  height: 32px;
  flex: none;
}

.bm svg.dim {
  opacity: 0.6;
}

.bm-more {
  width: 24px;
  height: 24px;
  flex: none;
  position: absolute;
  left: 2984px;
}

.bm-all {
  position: absolute;
  left: 3077px;
  margin: 0;
}

/* firebase console behind the dialog */
.app {
  flex: 1;
  min-height: 0;
  display: flex;
}

.sidebar {
  position: relative;
  width: 512px;
  flex: none;
  border-left: 2px solid #38465b;
  background-color: #121d2a;
  display: flex;
  flex-direction: column;
  color: #7b8799;
  overflow: hidden;
}

.brand {
  height: 97px;
  flex: none;
  display: flex;
  align-items: center;
  margin: 0 22px 0 5px;
  padding-left: 40px;
  border-bottom: 2px solid #1a2635;
}

.brand-logo {
  width: 40px;
  height: 52px;
  margin-right: 30px;
  opacity: 0.65;
}

.brand-name {
  font-family: "Open Sans", Roboto, sans-serif;
  font-size: 44px;
  color: #8995a8;
}

.overview {
  height: 113px;
  flex: none;
  display: flex;
  align-items: center;
  margin: 0 22px 0 5px;
  padding-left: 40px;
  border-bottom: 2px solid #1a2635;
}

.side-icon {
  width: 38px;
  height: 38px;
  flex: none;
  fill: #677488;
  margin-right: 34px;
}

.side-icon.stroked {
  fill: none;
  stroke: #677488;
  stroke-width: 2.4;
}

.dots {
  stroke-width: 3.4;
  stroke-linecap: round;
}

.side-label {
  font-size: 28px;
  font-weight: 500;
  white-space: nowrap;
}

.overview-rule {
  width: 2px;
  height: 44px;
  margin-left: 34px;
  background-color: #1f2b3b;
}

.overview-gear {
  width: 40px;
  height: 40px;
  margin-left: 48px;
  fill: #677488;
}

.side-heading {
  height: 90px;
  flex: none;
  padding: 32px 0 0 45px;
  font-size: 24px;
  color: #66738a;
}

.side-heading.second {
  height: 108px;
  padding-top: 38px;
}

.side-list {
  list-style: none;
  margin: 0;
  padding: 0;
}

.side-item {
  height: 64px;
  width: 480px;
  margin-left: 5px;
  display: flex;
  align-items: center;
  padding-left: 40px;
  border-radius: 32px;
}

.side-item.active {
  background-color: #1d3568;
  color: #96a7c4;
}

.side-item.active .side-icon {
  stroke: #8d9cb8;
}

.badge-new {
  margin-left: 16px;
  padding: 0 16px;
  height: 34px;
  line-height: 30px;
  font-size: 18px;
  font-weight: 500;
  color: #4a6bb0;
  border: 2px solid #3f5f9f;
  border-radius: 17px;
}

.categories {
  width: 456px;
  height: 275px;
  margin-left: 17px;
  flex: none;
  border-radius: 24px 24px 0 0;
  overflow: hidden;
}

.category {
  height: 85.5px;
  padding: 0 18px 4px 28px;
  display: flex;
  align-items: center;
  justify-content: space-between;
  background-color: #162332;
  border-bottom: 3px solid #111b27;
  font-family: "Open Sans", Roboto, sans-serif;
  font-size: 30px;
  color: #6e7b8f;
}

.chev {
  width: 36px;
  height: 36px;
  fill: #6e7b8f;
}

.plan {
  flex: 1;
  margin-left: 17px;
  border-top: 2px solid #1a2635;
  padding-left: 48px;
  position: relative;
  font-size: 28px;
  font-weight: 500;
  color: #76828f;
}

.plan-name {
  position: absolute;
  top: 26px;
  left: 48px;
}

.plan-upgrade {
  position: absolute;
  top: 44px;
  left: 308px;
  color: #6f7c8f;
}

.side-scroll {
  position: absolute;
  left: 494px;
  top: 96px;
  width: 16px;
  height: 1118px;
  background-color: #1a2636;
  border-radius: 8px;
  padding: 4px;
}

.side-thumb {
  width: 8px;
  height: 100%;
  background-color: #5c6a80;
  border-radius: 4px;
}

.main {
  flex: 1;
  min-width: 0;
  background-color: #0d1925;
  display: flex;
  flex-direction: column;
  color: #8693a6;
}

.topbar {
  height: 96px;
  flex: none;
  display: flex;
  align-items: center;
  padding-left: 47px;
}

.project {
  font-size: 28px;
  color: #8c99ac;
}

.caret {
  width: 0;
  height: 0;
  margin-left: 16px;
  border-left: 9px solid transparent;
  border-right: 9px solid transparent;
  border-top: 10px solid #8c99ac;
}

.top-icons {
  margin-left: auto;
  margin-right: 6px;
  display: flex;
  gap: 40px;
}

.top-icons svg {
  width: 40px;
  height: 40px;
  fill: #6b7688;
}

.page-title {
  margin: 0;
  padding-left: 47px;
  height: 96px;
  flex: none;
  font-family: "Open Sans", Roboto, sans-serif;
  font-size: 66px;
  line-height: 86px;
  font-weight: 400;
  color: #8c99ac;
}

.page-tabs {
  height: 83px;
  flex: none;
  margin-left: 47px;
  display: flex;
  align-items: flex-start;
  padding-top: 28px;
  border-bottom: 2px solid #2c3745;
  font-size: 28px;
  font-weight: 500;
  color: #6f7d92;
  gap: 66px;
  padding-left: 3px;
}

.page-tab.current {
  position: relative;
}

.page-tab.current::after {
  content: "";
  position: absolute;
  left: -3px;
  right: -8px;
  top: 39px;
  height: 6px;
  border-radius: 4px 4px 0 0;
  background-color: #7e8fb8;
}

.panel {
  margin-left: 434px;
  width: 1904px;
  background-color: #15212f;
  flex: none;
}

.panel-first {
  margin-top: 95px;
  height: 220px;
  border-radius: 24px 24px 0 0;
}

.panel-head {
  height: 63px;
  border-bottom: 2px solid #1b2737;
}

.panel-second {
  margin-top: 4px;
  flex: 1;
  border-radius: 16px 16px 0 0;
  position: relative;
}

.panel-row {
  height: 162px;
  margin-right: 16px;
  border-bottom: 2px solid #2a3646;
  display: flex;
  align-items: center;
  justify-content: flex-end;
  padding-right: 52px;
}

.kebab {
  width: 8px;
  height: 30px;
  fill: #677386;
}

.panel-note {
  position: absolute;
  bottom: -2px;
  left: 152px;
  margin: 0;
  font-size: 28px;
  line-height: 30px;
  white-space: nowrap;
  color: #5f6b7d;
}

.panel-note a {
  color: #4e6ba8;
  text-decoration: underline;
}

.panel-note .ext-link {
  fill: #4e6ba8;
}

.ext-link {
  width: 32px;
  height: 32px;
  margin-left: 1px;
  vertical-align: -8px;
  fill: #8ab4f8;
}

/* dialog */
.modal {
  position: absolute;
  left: 737px;
  top: 456px;
  width: 1840px;
  height: 1166px;
  background-color: #122138;
  border-radius: 24px;
  box-shadow: 0 8px 40px rgba(0, 0, 0, 0.45);
  display: flex;
  flex-direction: column;
  color: #9fadc2;
}

.modal-head {
  height: 120px;
  flex: none;
  display: flex;
  align-items: center;
  justify-content: space-between;
  padding: 32px 49px 4px 48px;
}

.modal-head h2 {
  margin: 0;
  font-family: "Open Sans", Roboto, sans-serif;
  font-size: 40px;
  font-weight: 500;
  color: #dbe6fb;
}

.modal-close {
  width: 48px;
  height: 48px;
  fill: #a9b4c5;
  margin-bottom: 6px;
}

.modal-text {
  margin: 15px 48px 0;
  font-size: 28px;
  line-height: 40.5px;
  white-space: nowrap;
}

.modal-text a {
  color: #8ab4f8;
  text-decoration: underline;
}

.btn-outline {
  width: 284px;
  height: 72px;
  margin: 46px 0 0 48px;
  flex: none;
  background: none;
  border: 2px solid #40495a;
  border-radius: 12px;
  font: 500 28px Roboto, sans-serif;
  letter-spacing: 0.5px;
  color: #8ab4f8;
}

.token-head {
  height: 63px;
  margin-top: 48px;
  flex: none;
  display: flex;
  align-items: center;
  padding: 4px 0 0 48px;
  background-color: #1c2b42;
  border-top: 2px solid #4d5a70;
  border-bottom: 2px solid #2a3950;
  font-size: 24px;
  font-weight: 500;
  color: #a8adb5;
}

.token-head span:first-child {
  width: 794px;
}

.token-row {
  display: flex;
  margin: 51px 48px 0;
  gap: 49px;
  flex: none;
}

.field {
  height: 72px;
  display: flex;
  align-items: center;
  padding: 0 0 2px 14px;
  border: 2px solid #46546b;
  border-radius: 6px;
  font-size: 32px;
  color: #d9e5fb;
}

.name-field {
  width: 719px;
  flex: none;
}

.value-col {
  flex: 1;
}

.value-field {
  border: 4px solid #8ab0f5;
  padding-left: 12px;
}

.cursor {
  width: 2px;
  height: 38px;
  background-color: #fff;
  margin-left: 1px;
}

.hint-row {
  display: flex;
  align-items: center;
  margin-top: 3px;
  padding-left: 3px;
  font-size: 24px;
}

.hint-icon {
  width: 26px;
  height: 26px;
  fill: #9aa7bb;
  margin-right: 11px;
}

.hint {
  color: #8591a3;
}

.generate {
  margin-left: auto;
  margin-top: 10px;
  font-size: 26px;
  color: #8ab4f8;
}

.warning {
  height: 99px;
  margin: 76px 48px 0;
  flex: none;
  display: flex;
  align-items: center;
  padding: 0 0 2px 53px;
  background-color: #272e38;
  border: 2px solid #675534;
  font-size: 28px;
  font-weight: 500;
  color: #f9b53f;
}

.warning-icon {
  width: 40px;
  height: 40px;
  fill: #f9b53f;
  margin-right: 28px;
  flex: none;
}

.modal-actions {
  height: 171px;
  flex: none;
  display: flex;
  align-items: flex-start;
  justify-content: flex-end;
  padding: 49px 48px 0 0;
  border-bottom: 2px solid #44546a;
}

.btn-text,
.btn-save {
  height: 72px;
  border: none;
  background: none;
  font: 500 28px Roboto, sans-serif;
  letter-spacing: 0.5px;
}

.btn-text {
  color: #a3acb9;
  margin-right: 49px;
  padding: 0;
}

.btn-save {
  width: 128px;
  background-color: #8aaef3;
  border-radius: 16px;
  color: #0f1e3c;
}
```
